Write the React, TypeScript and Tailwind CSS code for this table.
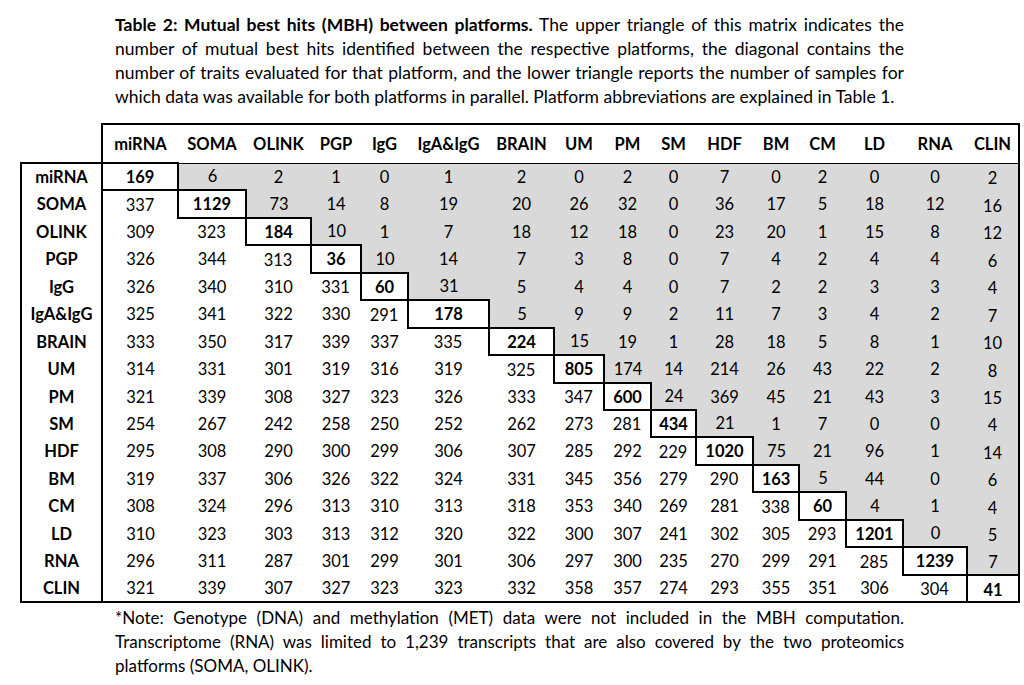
const platforms = [
  "miRNA",
  "SOMA",
  "OLINK",
  "PGP",
  "IgG",
  "IgA&IgG",
  "BRAIN",
  "UM",
  "PM",
  "SM",
  "HDF",
  "BM",
  "CM",
  "LD",
  "RNA",
  "CLIN",
];

const colWidths = [
  "w-[76px]",
  "w-[68px]",
  "w-[65px]",
  "w-[50px]",
  "w-[47px]",
  "w-[81px]",
  "w-[65px]",
  "w-[50px]",
  "w-[47px]",
  "w-[45px]",
  "w-[57px]",
  "w-[46px]",
  "w-[47px]",
  "w-[57px]",
  "w-[64px]",
  "w-[52px]",
];

// rows alternate 27/28px so the body spans the same 439px as the original
const rowHeights = [
  "h-[27px]",
  "h-[28px]",
  "h-[27px]",
  "h-[28px]",
  "h-[27px]",
  "h-[28px]",
  "h-[27px]",
  "h-[28px]",
  "h-[27px]",
  "h-[27px]",
  "h-[28px]",
  "h-[27px]",
  "h-[28px]",
  "h-[27px]",
  "h-[28px]",
  "h-[27px]",
];

const matrix: number[][] = [
  [169, 6, 2, 1, 0, 1, 2, 0, 2, 0, 7, 0, 2, 0, 0, 2],
  [337, 1129, 73, 14, 8, 19, 20, 26, 32, 0, 36, 17, 5, 18, 12, 16],
  [309, 323, 184, 10, 1, 7, 18, 12, 18, 0, 23, 20, 1, 15, 8, 12],
  [326, 344, 313, 36, 10, 14, 7, 3, 8, 0, 7, 4, 2, 4, 4, 6],
  [326, 340, 310, 331, 60, 31, 5, 4, 4, 0, 7, 2, 2, 3, 3, 4],
  [325, 341, 322, 330, 291, 178, 5, 9, 9, 2, 11, 7, 3, 4, 2, 7],
  [333, 350, 317, 339, 337, 335, 224, 15, 19, 1, 28, 18, 5, 8, 1, 10],
  [314, 331, 301, 319, 316, 319, 325, 805, 174, 14, 214, 26, 43, 22, 2, 8],
  [321, 339, 308, 327, 323, 326, 333, 347, 600, 24, 369, 45, 21, 43, 3, 15],
  [254, 267, 242, 258, 250, 252, 262, 273, 281, 434, 21, 1, 7, 0, 0, 4],
  [295, 308, 290, 300, 299, 306, 307, 285, 292, 229, 1020, 75, 21, 96, 1, 14],
  [319, 337, 306, 326, 322, 324, 331, 345, 356, 279, 290, 163, 5, 44, 0, 6],
  [308, 324, 296, 313, 310, 313, 318, 353, 340, 269, 281, 338, 60, 4, 1, 4],
  [310, 323, 303, 313, 312, 320, 322, 300, 307, 241, 302, 305, 293, 1201, 0, 5],
  [296, 311, 287, 301, 299, 301, 306, 297, 300, 235, 270, 299, 291, 285, 1239, 7],
  [321, 339, 307, 327, 323, 323, 332, 358, 357, 274, 293, 355, 351, 306, 304, 41],
];

const last = platforms.length - 1;

function cellClass(r: number, c: number) {
  const cls = ["p-0 text-center align-middle"];
  if (r === c) cls.push("border-2 border-black bg-white font-bold");
  else if (c > r) cls.push("bg-[#d9d9d9]");
  else cls.push("bg-white");
  if (c === last) cls.push("border-r-2 border-black pt-[3px]");
  if (r === last) cls.push("border-b-2 border-black");
  return cls.join(" ");
}

function JustifiedLine({ children }: { children: React.ReactNode }) {
  return <div className="whitespace-nowrap text-justify [text-align-last:justify]">{children}</div>;
}

export default function App() {
  return (
    <div className="h-[685px] w-[1024px] overflow-hidden bg-white font-[Lato,sans-serif] text-[16.5px] text-black">
      <div className="ml-[115px] mt-[13px] w-[789px] text-[17.5px] leading-[24px]">
        <JustifiedLine>
          <b>Table 2: Mutual best hits (MBH) between platforms.</b> The upper triangle of this matrix indicates the
        </JustifiedLine>
        <JustifiedLine>
          number of mutual best hits identified between the respective platforms, the diagonal contains the
        </JustifiedLine>
        <JustifiedLine>
          number of traits evaluated for that platform, and the lower triangle reports the number of samples for
        </JustifiedLine>
        <div className="whitespace-nowrap">
          which data was available for both platforms in parallel. Platform abbreviations are explained in Table 1.
        </div>
      </div>

      <table className="ml-[20px] mt-[14px] w-[998px] table-fixed border-collapse leading-[20px]">
        <colgroup>
          <col className="w-[81px]" />
          {colWidths.map((w, i) => (
            <col key={i} className={w} />
          ))}
        </colgroup>
        <thead>
          <tr className="h-[39px]">
            <th className="p-0" />
            {platforms.map((p, i) => (
              <th
                key={p}
                className={
                  "border-t-2 border-b-[1.5px] border-black p-0 text-center align-middle font-bold" +
                  (i === 0 ? " border-l-2" : "") +
                  (i === last ? " border-r-2" : "")
                }
              >
                {p}
              </th>
            ))}
          </tr>
        </thead>
        <tbody>
          {matrix.map((row, r) => (
            <tr key={platforms[r]} className={rowHeights[r]}>
              <td
                className={
                  "border-x-2 border-black bg-white p-0 text-center align-middle font-bold" +
                  (r === 0 ? " border-t-2" : "") +
                  (r === last ? " border-b-2" : "")
                }
              >
                {platforms[r]}
              </td>
              {row.map((v, c) => (
                <td key={c} className={cellClass(r, c)}>
                  {v}
                </td>
              ))}
            </tr>
          ))}
        </tbody>
      </table>

      <div className="ml-[115px] mt-[3px] w-[789px] text-[17px] leading-[24px]">
        <JustifiedLine>
          *Note: Genotype (DNA) and methylation (MET) data were not included in the MBH computation.
        </JustifiedLine>
        <JustifiedLine>
          Transcriptome (RNA) was limited to 1,239 transcripts that are also covered by the two proteomics
        </JustifiedLine>
        <div className="whitespace-nowrap">platforms (SOMA, OLINK).</div>
      </div>
    </div>
  );
}
